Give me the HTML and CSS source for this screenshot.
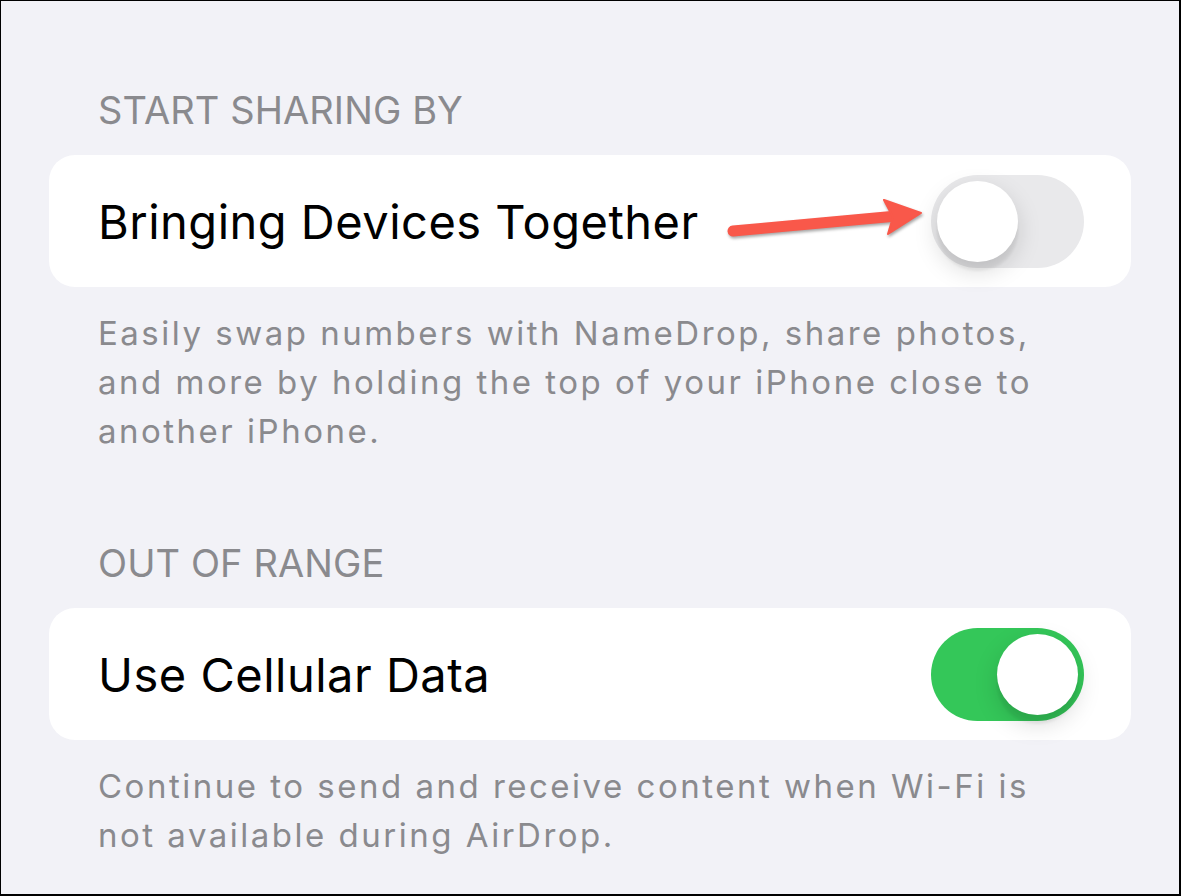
FILE: index.html
```html
<!DOCTYPE html>
<html lang="en">
<head>
    <meta charset="UTF-8">
    <meta name="viewport" content="width=device-width, initial-scale=1.0">
    <title>AirDrop</title>
    <link rel="stylesheet" href="styles.css">
</head>
<body>

<div class="screen">
    <!-- Section : Start sharing by -->
    <h3 class="section-title first">START SHARING BY</h3>
    <div class="card">
        <span class="row-label">Bringing Devices Together</span>
        <svg class="arrow" width="200" height="50" viewBox="0 0 200 50">
            <line x1="8" y1="33" x2="172" y2="18" stroke="#f9584a" stroke-width="11" stroke-linecap="round"/>
            <polygon points="159,2 196,15 163,36 168,19" fill="#f9584a" stroke="#f9584a" stroke-width="2" stroke-linejoin="round"/>
        </svg>
        <div class="switch"><div class="knob"></div></div>
    </div>
    <p class="footnote">Easily swap numbers with NameDrop, share photos, and more by holding the top of your iPhone close to another iPhone.</p>

    <!-- Section : Out of range -->
    <h3 class="section-title">OUT OF RANGE</h3>
    <div class="card">
        <span class="row-label">Use Cellular Data</span>
        <div class="switch on"><div class="knob"></div></div>
    </div>
    <p class="footnote">Continue to send and receive content when Wi-Fi is not available during AirDrop.</p>
</div>

</body>
</html>
```

FILE: styles.css
```css
body {
    margin: 0;
    padding: 0;
    font-family: Inter, "Noto Sans", sans-serif;
    background-color: #fff;
}
.screen {
    width: 1181px;
    height: 896px;
    box-sizing: border-box;
    border-style: solid;
    border-color: #000;
    border-width: 1px 2px 2px 1px;
    background-color: #f2f2f7; /* fond iOS */
    padding: 0 48px;
    overflow: hidden;
}
.section-title {
    margin: 84px 0 0 0;
    padding-left: 49px;
    font-size: 38px;
    font-weight: 400;
    line-height: 46px;
    color: #8a8a8e;
    letter-spacing: 0.1px;
}
.section-title.first {
    margin-top: 86px;
}
.card {
    position: relative;
    height: 132px;
    margin-top: 22px;
    padding: 0 47px 0 49px;
    background-color: #fff;
    border-radius: 26px;
    display: flex;
    align-items: center;
    justify-content: space-between;
}
.row-label {
    font-size: 47px;
    color: #000;
    letter-spacing: 0.5px;
}
.footnote {
    margin: 22px 0 0 0;
    padding: 0 70px 0 49px;
    font-size: 33px;
    line-height: 49px;
    color: #8a8a8e;
    letter-spacing: 2.5px;
}
/* Interrupteur */
.switch {
    position: relative;
    width: 153px;
    height: 93px;
    border-radius: 47px;
    background-color: #e9e9eb;
}
.switch .knob {
    position: absolute;
    top: 6px;
    left: 6px;
    width: 81px;
    height: 81px;
    border-radius: 50%;
    background-color: #fff;
    box-shadow: 0 9px 24px rgba(0, 0, 0, 0.15), 0 9px 3px rgba(0, 0, 0, 0.06);
}
.switch.on {
    background-color: #34c759;
}
.switch.on .knob {
    left: 66px;
}
/* Flèche d'annotation */
.arrow {
    position: absolute;
    left: 676px;
    top: 43px;
    filter: drop-shadow(1px 2px 1.5px rgba(0, 0, 0, 0.35));
}
```
